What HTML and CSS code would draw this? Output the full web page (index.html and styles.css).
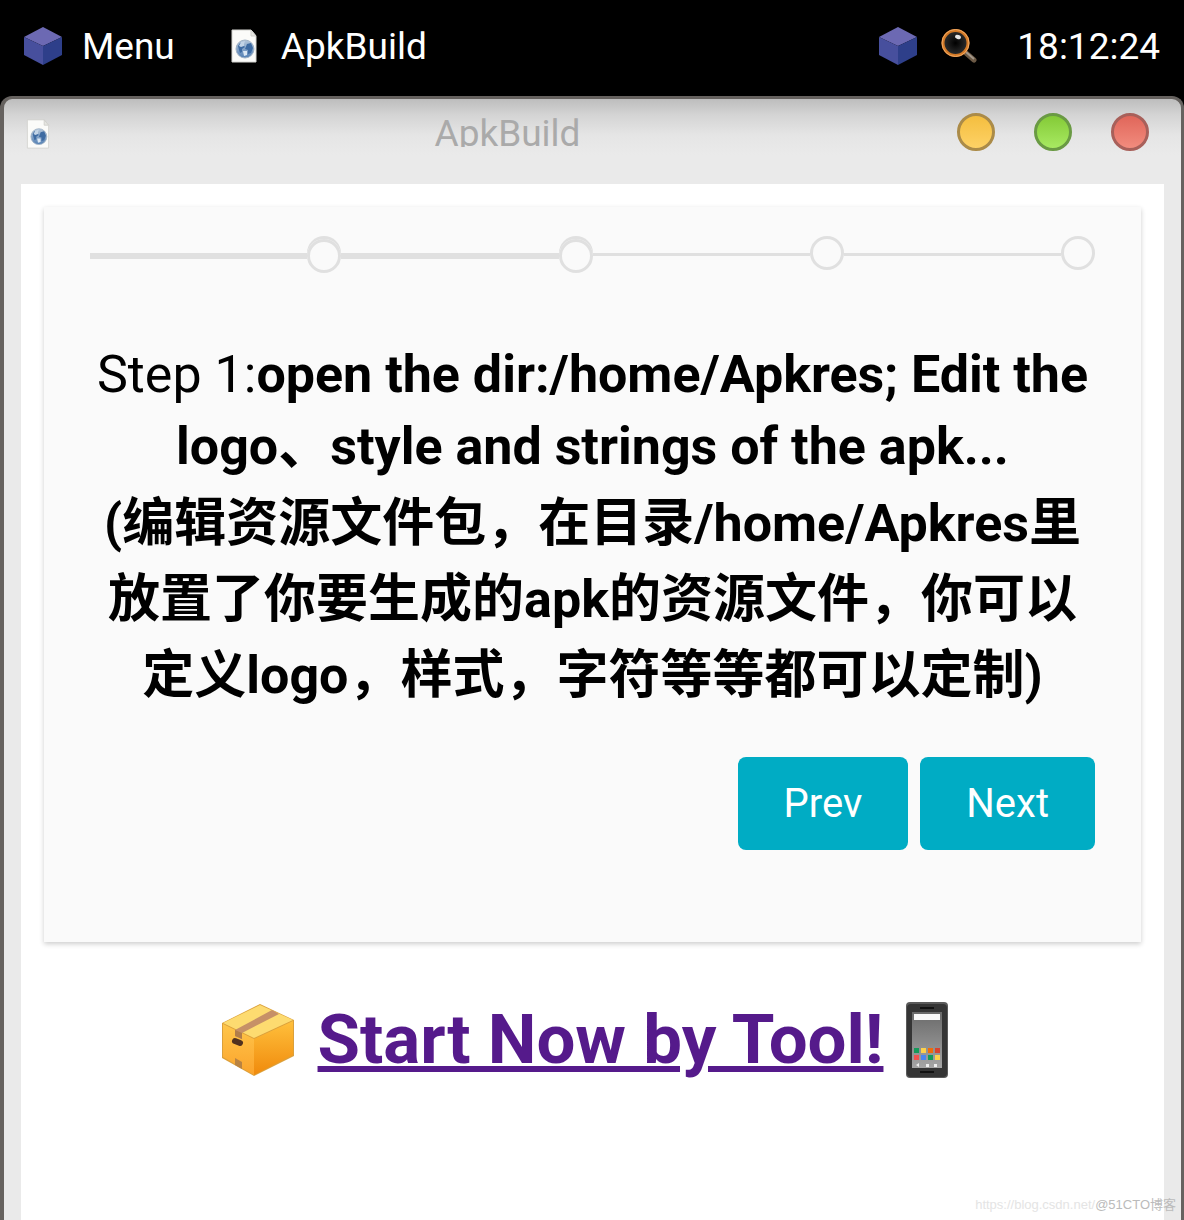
FILE: index.html
```html
<!DOCTYPE html>
<html lang="en">
<head>
<meta charset="utf-8">
<meta name="viewport" content="width=device-width, initial-scale=1">
<title>ApkBuild</title>
<link rel="stylesheet" href="styles.css">
</head>
<body>
<svg class="defs" aria-hidden="true">
  <defs>
    <linearGradient id="globe" x1="0" y1="0" x2="0" y2="1"><stop offset="0" stop-color="#b4c6da"/><stop offset="1" stop-color="#5480b4"/></linearGradient>
    <radialGradient id="lens"><stop offset="0" stop-color="#000"/><stop offset="1" stop-color="#303030"/></radialGradient>
    <linearGradient id="boxLeft" x1="0" y1="0" x2="0" y2="1"><stop offset="0" stop-color="#ffc64a"/><stop offset="1" stop-color="#fba32c"/></linearGradient>
    <linearGradient id="boxRight" x1="0" y1="0" x2="0" y2="1"><stop offset="0" stop-color="#ffc03c"/><stop offset="1" stop-color="#f08a0c"/></linearGradient>
    <linearGradient id="screen" x1="0" y1="0" x2="0" y2="1"><stop offset="0" stop-color="#6a6a6a"/><stop offset="1" stop-color="#a5a5a5"/></linearGradient>
    <symbol id="cube" viewBox="0 0 38 38">
      <path d="M19 0 38 10 19 19 0 10Z" fill="#6c69b3"/>
      <path d="M0 10 19 19V38L0 28Z" fill="#474f9d"/>
      <path d="M38 10 19 19V38L38 28Z" fill="#2e3f8a"/>
    </symbol>
    <symbol id="webpage" viewBox="0 0 26 34">
      <path d="M1 1H20L25 7V33H1Z" fill="#fbfbf9" stroke="#d4d4d0"/>
      <path d="M20 1V7H25Z" fill="#e6e6e2" stroke="#cfcfcb"/>
      <circle cx="14" cy="20" r="9" fill="url(#globe)" stroke="#a3b4c6"/>
      <path d="M7 17 9 14 13 13 12 16 14 18 11 20 11 23 9 24 8 21Z" fill="#3e6ba2"/>
      <path d="M10 13 14 12 13 15 13 17 10 18 8 17Z" fill="#c3d4e6"/>
      <path d="M16 15 20 14 22 19 20 24 17 25 17 21 14 20Z" fill="#3e6ba2"/>
      <path d="M12 22 16 22 16 26 13 27Z" fill="#dce8f4"/>
    </symbol>
  </defs>
</svg>

<header class="taskbar">
  <button class="task menu" type="button"><svg class="cube"><use href="#cube"/></svg>Menu</button>
  <button class="task" type="button"><svg class="file"><use href="#webpage"/></svg>ApkBuild</button>
  <div class="tray">
    <button class="task" type="button" aria-label="Desktop"><svg class="cube"><use href="#cube"/></svg></button>
    <button class="task" type="button" aria-label="Search">
      <svg class="search" viewBox="0 0 36 36">
        <path d="M25 25 33 32" stroke="#6b5945" stroke-width="5" stroke-linecap="round"/>
        <path d="M25 24 33 31" stroke="#a3978a" stroke-width="2"/>
        <circle cx="14.500" cy="15" r="12.500" fill="url(#lens)" stroke="#d47a27" stroke-width="3"/>
        <circle cx="14.500" cy="15" r="13.500" fill="none" stroke="#f2ab66" stroke-width="1"/>
        <ellipse cx="17" cy="9" rx="3" ry="2" fill="#e6e6e6" transform="rotate(20 17 9)"/>
      </svg>
    </button>
    <time class="clock">18:12:24</time>
  </div>
</header>

<main class="window">
  <div class="titlebar">
    <svg class="file small"><use href="#webpage"/></svg>
    <h1 class="title">ApkBuild</h1>
    <div class="controls">
      <button class="dot yellow" type="button" aria-label="Minimize"></button>
      <button class="dot green" type="button" aria-label="Maximize"></button>
      <button class="dot red" type="button" aria-label="Close"></button>
    </div>
  </div>
  <div class="content">
    <section class="card">
      <ol class="steps">
        <li class="step done"></li>
        <li class="step done"></li>
        <li class="step"></li>
        <li class="step"></li>
      </ol>
      <div class="message">
        <p class="english">Step 1:<b>open the dir:/home/Apkres; Edit the logo、style and strings of the apk...</b></p>
        <p class="chinese" lang="zh"><b>(编辑资源文件包，在目录/home/Apkres里放置了你要生成的apk的资源文件，你可以定义logo，样式，字符等等都可以定制)</b></p>
      </div>
      <div class="actions">
        <button class="btn" type="button">Prev</button>
        <button class="btn" type="button">Next</button>
      </div>
    </section>
    <h2 class="start">
      <svg class="box" viewBox="0 0 74 74" aria-hidden="true">
        <path d="M1 20 39 1 73 17V53L33 73 1 55Z" fill="#dba03b"/>
        <path d="M2 20 39 2 72 17 33 35Z" fill="#fddb70"/>
        <path d="M2 21 33 36V72L2 54Z" fill="url(#boxLeft)"/>
        <path d="M72 18 33 36V72L72 52Z" fill="url(#boxRight)"/>
        <path d="M14 27 51 7 58 11 21 30V36L14 33Z" fill="#c69067"/>
        <path d="M14 27 21 30V36L14 33Z" fill="#b17d4a"/>
        <path d="M14 55 21 59V66L14 62Z" fill="#b98342"/>
        <path d="M14 38 19 40" stroke="#50311f" stroke-width="6" stroke-linecap="round"/>
      </svg>
      <a class="link" href="#">Start Now by Tool!</a>
      <svg class="phone" viewBox="0 0 42 76" aria-hidden="true">
        <rect width="42" height="76" rx="4" fill="#5a5a5a"/>
        <rect x="1" y="2" width="40" height="73" rx="4" fill="#353535"/>
        <path d="M14 6H28M14 70H28" stroke="#111" stroke-width="2"/>
        <rect x="6" y="10" width="30" height="56" fill="url(#screen)"/>
        <rect x="8" y="12" width="26" height="6" fill="#fafafa"/>
        <path d="M8 46h5v5h-5zM22 53h5v5h-5z" fill="#159a5a"/>
        <path d="M15 46h5v5h-5zM29 53h5v5h-5z" fill="#fdd14b"/>
        <path d="M22 46h5v5h-5z" fill="#ef6c0a"/>
        <path d="M29 46h5v5h-5z" fill="#d8432f"/>
        <path d="M8 53h5v5h-5z" fill="#f0524f"/>
        <path d="M15 53h5v5h-5z" fill="#4a86ee"/>
        <path d="M10 63 13 61V65ZM20 62h3v3h-3zM28 62h3v3h-3z" fill="#eee"/>
      </svg>
    </h2>
  </div>
</main>
<div class="watermark"><span class="source">https://blog.csdn.net/</span><span class="owner">@51CTO博客</span></div>
</body>
</html>
```
FILE: styles.css
```css
*, *::before, *::after { box-sizing: border-box; }

body {
  margin: 0;
  min-height: 100vh;
  display: flex;
  flex-direction: column;
  position: relative;
  background: #000;
  color: #000;
  font-family: Roboto, "Noto Sans CJK SC", sans-serif;
}

button {
  border: 0;
  padding: 0;
  font: inherit;
  cursor: pointer;
}

h1, h2, p, ol { margin: 0; padding: 0; }

svg { display: block; flex: none; }
.defs { position: absolute; width: 0; height: 0; }

.taskbar {
  display: flex;
  align-items: center;
  gap: 56px;
  height: 96px;
  padding: 0 24px 4px;
  color: #fff;
  font-size: 37px;
}

.task {
  display: flex;
  align-items: center;
  gap: 24px;
  background: none;
  color: inherit;
}
.menu { gap: 20px; }

.tray {
  display: flex;
  align-items: center;
  gap: 24px;
  margin-left: auto;
}

.cube { width: 38px; height: 38px; }
.file { width: 26px; height: 34px; }
.file.small { width: 24px; height: 30px; }
.search { width: 36px; height: 36px; }
.clock { margin-left: 16px; }

.window {
  flex: 1;
  display: flex;
  flex-direction: column;
  padding: 0 17px;
  border: 3px solid #66625f;
  border-bottom: 0;
  border-left-width: 4px;
  border-radius: 12px 12px 0 0;
  background: #eaeaea linear-gradient(#bdbdbd, #d4d4d4 16px, #e5e5e5 36px, #eaeaea 56px) no-repeat 0 0 / 100% 56px;
}

.titlebar {
  display: flex;
  align-items: flex-start;
  height: 85px;
  padding: 14px 15px 0 5px;
}
.titlebar .small { margin-top: 6px; }

.title {
  flex: 1;
  height: 34px;
  padding-left: 8px;
  overflow: hidden;
  color: #aaa;
  font-size: 37px;
  font-weight: 400;
  line-height: 42px;
  text-align: center;
}

.controls { display: flex; gap: 39px; }
.dot {
  width: 38px;
  height: 38px;
  border: 3px solid;
  border-radius: 50%;
}
.yellow { border-color: #ab8b48; background: linear-gradient(#f4be3f, #fed266); }
.green { border-color: #6a9a44; background: linear-gradient(#84ca37, #a8ea62); }
.red { border-color: #a8605a; background: linear-gradient(#e0665a, #f28c7e); }

.content {
  flex: 1;
  padding: 23px;
  background: #fff;
}

.card {
  padding: 29px 46px 92px;
  background: #fafafa;
  box-shadow: 0 2px 5px rgba(0, 0, 0, .2);
}

.steps {
  display: grid;
  grid-template-columns: repeat(4, 1fr);
  list-style: none;
}
.step { display: flex; }
.step::before {
  content: "";
  flex: 1;
  height: 3px;
  margin-top: 17px;
  background: #e0e0e0;
}
.step::after {
  content: "";
  width: 34px;
  height: 34px;
  border: 3px solid #e0e0e0;
  border-radius: 50%;
}
.done::before { height: 6px; }
.done::after {
  margin-top: 3px;
  box-shadow: 0 -3px #e0e0e0;
}

.message {
  margin-top: 66px;
  font-size: 52px;
  text-align: center;
}
.english { line-height: 72px; }
.chinese {
  margin-top: 3px;
  line-height: 76px;
}

.actions {
  display: flex;
  justify-content: flex-end;
  gap: 12px;
  margin-top: 43px;
}
.btn {
  height: 93px;
  padding: 0 46px;
  border-radius: 8px;
  background: #00acc4;
  color: #fff;
  font-size: 40px;
}

.start {
  display: flex;
  justify-content: center;
  align-items: center;
  gap: 23px;
  margin-top: 58px;
  padding-right: 16px;
  font-size: 69px;
  line-height: 80px;
}
.box { width: 74px; height: 74px; }
.phone { width: 42px; height: 76px; }
.link {
  color: #551a8b;
  text-decoration-thickness: 6px;
}

.watermark {
  position: absolute;
  right: 8px;
  bottom: 5px;
  font: 13px/20px "Liberation Sans", "Noto Sans CJK SC", sans-serif;
}
.source { color: #e4e4e4; }
.owner { color: #bbb; }
```
